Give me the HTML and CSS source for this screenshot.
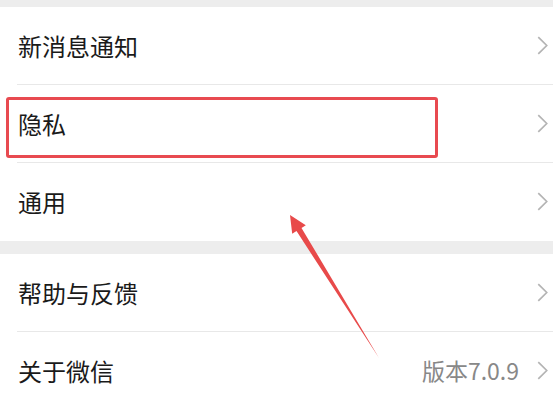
FILE: index.html
```html
<!DOCTYPE html>
<html lang="zh-CN">

<head>
  <meta charset="UTF-8">
  <meta name="viewport" content="width=device-width, initial-scale=1.0">
  <title>设置</title>
  <link rel="stylesheet" href="styles.css">
</head>

<body>

  <div class="page">
    <div class="group">
      <div class="cell">
        <span class="title">新消息通知</span>
        <span class="arrow"><svg viewBox="0 0 10 18"><polyline points="1,1 9,9 1,17" /></svg></span>
      </div>
      <div class="cell">
        <span class="title">隐私</span>
        <span class="arrow"><svg viewBox="0 0 10 18"><polyline points="1,1 9,9 1,17" /></svg></span>
      </div>
      <div class="cell">
        <span class="title">通用</span>
        <span class="arrow"><svg viewBox="0 0 10 18"><polyline points="1,1 9,9 1,17" /></svg></span>
      </div>
    </div>

    <div class="group">
      <div class="cell">
        <span class="title">帮助与反馈</span>
        <span class="arrow"><svg viewBox="0 0 10 18"><polyline points="1,1 9,9 1,17" /></svg></span>
      </div>
      <div class="cell">
        <span class="title">关于微信</span>
        <span class="value">版本7.0.9</span>
        <span class="arrow"><svg viewBox="0 0 10 18"><polyline points="1,1 9,9 1,17" /></svg></span>
      </div>
    </div>

    <!-- annotation -->
    <div class="mark-box"></div>
    <svg class="mark-arrow" viewBox="0 0 553 403">
      <polygon points="290,215 305.8,225.3 301.5,227.9 379,358 296.5,231.1 292.2,233.7" />
    </svg>
  </div>

</body>

</html>
```

FILE: styles.css
```css
* {
  margin: 0;
  padding: 0;
  box-sizing: border-box;
}

body {
  background: #ededed;
  font-family: "Noto Sans CJK SC", "Noto Sans", sans-serif;
  overflow: hidden;
}

.page {
  position: relative;
  padding-top: 7px;
  height: 403px;
}

.group {
  background: #fff;
  margin-bottom: 13px;
}

.group .cell {
  position: relative;
  display: flex;
  align-items: center;
  height: 78px;
  padding: 0 5px 1px 18px;
}

.group .cell::after {
  content: '';
  position: absolute;
  left: 17px;
  right: 0;
  bottom: 0;
  height: 1px;
  background: #e8e8e8;
}

.group .cell:last-child::after {
  display: none;
}

.group .cell .title {
  flex: 1;
  font-size: 24px;
  color: #1a1a1a;
  line-height: 1;
}

.group .cell .value {
  font-size: 23px;
  color: #888;
  margin-right: 18px;
  line-height: 1;
}

.group .cell .arrow svg {
  display: block;
  width: 11px;
  height: 19px;
  fill: none;
  stroke: #b4b4b4;
  stroke-width: 1.6;
}

.mark-box {
  position: absolute;
  left: 6px;
  top: 97px;
  width: 432px;
  height: 61px;
  border: 3px solid #e84a50;
  border-radius: 3px;
}

.mark-arrow {
  position: absolute;
  left: 0;
  top: 0;
  width: 553px;
  height: 403px;
  fill: #e84a4a;
}
```
